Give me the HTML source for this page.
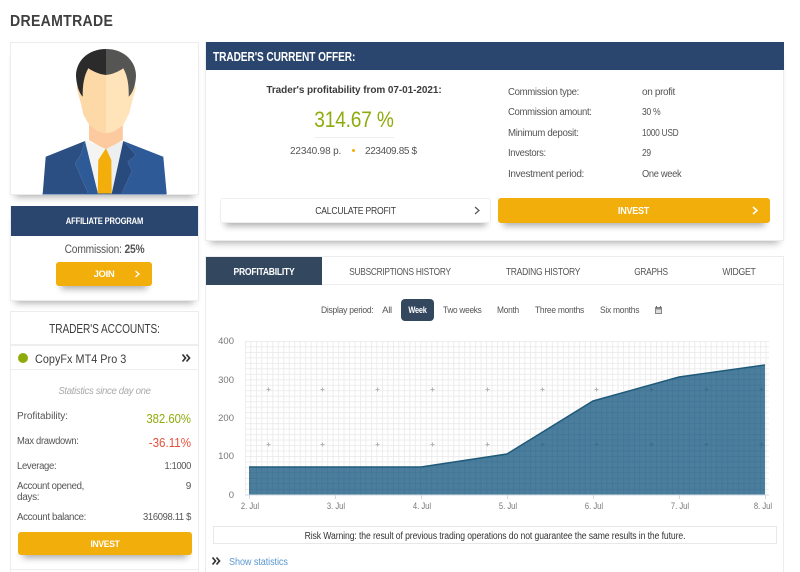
<!DOCTYPE html>
<html lang="en"><head><meta charset="utf-8"><title>DreamTrade</title>
<style>
*{box-sizing:border-box}
html,body{margin:0;padding:0;background:#fff;width:800px;height:572px;overflow:hidden}
body{font-family:"Liberation Sans",sans-serif;color:#444}
#p{position:relative;width:800px;height:572px;overflow:hidden}
.a{position:absolute}
.t{position:absolute;white-space:nowrap;line-height:14px;height:14px;font-size:10px;letter-spacing:-.35px;color:#555;transform-origin:left center}
.c{text-align:center;transform-origin:center center}.r{text-align:right;transform-origin:right center}
.card{position:absolute;background:#fff;border:1px solid #ececec}
.sh{box-shadow:0 7px 7px -5px rgba(0,0,0,.32)}
.btn{position:absolute;border-radius:3px;background:#f2ae0b;box-shadow:0 8px 7px -5px rgba(0,0,0,.32)}
.w{color:#fff;font-weight:bold}
.d{font-size:9.5px;letter-spacing:-.3px}
.y{font-size:9.5px;letter-spacing:0;color:#777}
.x{font-size:9.5px;letter-spacing:0;color:#777;transform:scaleX(.8)}
svg{position:absolute;left:0;top:0;overflow:visible}
</style></head><body><div id="p">

<div class="t" style="left:10px;top:15px;font-size:16px;font-weight:bold;color:#3f3f3f;letter-spacing:.35px;transform:scaleX(.88)">DREAMTRADE</div>

<div class="card sh" style="left:10px;top:42px;width:189px;height:153px"></div>
<svg width="800" height="572" viewBox="0 0 800 572">
<path d="M89 120H122.7V140L106 150 89 140Z" fill="#fdc99f"/>
<path d="M76.7 88 81 104 83.5 115 89.3 125 98 131.5 106 133.5V60H84Z" fill="#fdd9a8"/>
<path d="M135.8 88 131.5 104 129.3 113 123.3 125 114 131.5 106 133.5V60H128Z" fill="#fee4b8"/>
<path d="M89 125.5Q106 141 122.7 125.5V140L106 149 89 140Z" fill="#fdc99f"/>
<path d="M106 49C88 49 76 61 76 76 76.5 85 79 93 82.7 96.7 82.5 85 84 76 88.3 68.3 94 72 100 74.5 106 75Z" fill="#2b2b2b"/>
<path d="M106 49C124 49 136 61 136 76 135.5 85 133 93 128.7 96.7 129 85 127.5 76 123.3 68.3 118 72 112 74.5 106 75Z" fill="#555553"/>
<path d="M85 140 106 149 123.3 140.5 114 194H98Z" fill="#f4f5f2"/>
<path d="M106 149 123.3 140.5 114 194H106Z" fill="#eceef0"/>
<path d="M42.7 193.7 45.7 156.7 85 141 80.7 155 75 163.3 88.3 193.7Z" fill="#2b4f83"/>
<path d="M85 141 98 193.7H88.3L75 163.3 80.7 155Z" fill="#2e5b98"/>
<path d="M123.3 141 163.3 156.7 166.7 193.7H121.7L131.7 171 127.7 161.7 136 155Z" fill="#2e5b98"/>
<path d="M123.3 141 136 155 127.7 161.7 131.7 171 121.7 193.7H111.7Z" fill="#284a7c"/>
<path d="M106 148.3 111.3 160 111.7 193.7H97.7L98.3 160Z" fill="#f3ae0c"/>
<rect x="42.5" y="193.5" width="124" height="1" fill="#2e5b98"/>
</svg>

<!-- Affiliate -->
<div class="card sh" style="left:10px;top:206px;width:189px;height:95px"></div>
<div class="a" style="left:11px;top:206px;width:187px;height:30px;background:#2b466e"></div>
<div class="t c w" style="left:11px;top:215px;width:187px;font-size:9.5px;letter-spacing:-.2px;transform:scaleX(.8)">AFFILIATE PROGRAM</div>
<div class="t c" style="left:11px;top:243px;width:187px;font-size:11.5px;letter-spacing:-.2px;transform:scaleX(.89)">Commission: <b>25%</b></div>
<div class="btn" style="left:56px;top:262px;width:96px;height:24px"></div>
<div class="t c w" style="left:56px;top:268px;width:96px;font-size:9.5px">JOIN</div>
<svg width="800" height="572"><path d="M135.5 271 139 274 135.5 277" fill="none" stroke="#fff" stroke-width="1.3"/></svg>

<!-- Accounts -->
<div class="card" style="left:10px;top:311px;width:189px;height:280px"></div>
<div class="t c" style="left:11px;top:322px;width:187px;font-size:12.5px;letter-spacing:-.1px;color:#3c3c3c;transform:scaleX(.81)">TRADER'S ACCOUNTS:</div>
<div class="a" style="left:11px;top:344px;width:187px;height:2px;background:#eee"></div>
<div class="a" style="left:18px;top:353px;width:10px;height:10px;border-radius:50%;background:#8eab0c"></div>
<div class="t" style="left:35px;top:352px;font-size:12px;letter-spacing:.05px;color:#3c3c3c;transform:scaleX(.9)">CopyFx MT4 Pro 3</div>
<svg width="800" height="572"><path d="M182.5 354.5 185.5 358 182.5 361.5M186.5 354.5 189.5 358 186.5 361.5" fill="none" stroke="#333" stroke-width="1.7"/></svg>
<div class="a" style="left:11px;top:369px;width:187px;height:1px;background:#eee"></div>
<div class="t c" style="left:11px;top:385px;width:187px;font-style:italic;color:#aaa;transform:scaleX(.96)">Statistics since day one</div>
<div class="t" style="left:17px;top:410px;letter-spacing:-.05px">Profitability:</div>
<div class="t r" style="left:100px;top:412px;width:91px;font-size:13px;letter-spacing:0;color:#8eab0c;transform:scaleX(.87)">382.60%</div>
<div class="t" style="left:17px;top:435px;transform:scaleX(.94)">Max drawdown:</div>
<div class="t r" style="left:100px;top:436px;width:91px;font-size:13px;letter-spacing:0;color:#e5503c;transform:scaleX(.89)">-36.11%</div>
<div class="t" style="left:17px;top:460px;transform:scaleX(.95)">Leverage:</div>
<div class="t r" style="left:100px;top:460px;width:91px;transform:scaleX(.93)">1:1000</div>
<div class="t" style="left:17px;top:480px;transform:scaleX(.96)">Account opened,</div>
<div class="t" style="left:17px;top:491px">days:</div>
<div class="t r" style="left:100px;top:480px;width:91px">9</div>
<div class="t" style="left:17px;top:511px;transform:scaleX(.97)">Account balance:</div>
<div class="t r" style="left:100px;top:511px;width:91px;transform:scaleX(.94)">316098.11 $</div>
<div class="btn" style="left:18px;top:532px;width:174px;height:23px"></div>
<div class="t c w" style="left:18px;top:538px;width:174px;font-size:9.5px;transform:scaleX(.9)">INVEST</div>
<div class="a" style="left:11px;top:569px;width:187px;height:1px;background:#eee"></div>

<!-- Offer -->
<div class="card sh" style="left:205px;top:42px;width:579px;height:199px"></div>
<div class="a" style="left:206px;top:42px;width:578px;height:28px;background:#2b466e"></div>
<div class="t w" style="left:213px;top:50px;font-size:12.5px;letter-spacing:-.1px;transform:scaleX(.81)">TRADER'S CURRENT OFFER:</div>
<div class="t c" style="left:254px;top:84px;width:200px;font-weight:bold;color:#3c3c3c;letter-spacing:-.07px">Trader's profitability from 07-01-2021:</div>
<div class="t c" style="left:284px;top:113px;width:140px;font-size:22px;letter-spacing:-.2px;color:#8eab0c;transform:scaleX(.87)">314.67 %</div>
<div class="a" style="left:314px;top:137px;width:80px;height:1px;background:#eee"></div>
<div class="t" style="left:290px;top:145px;letter-spacing:-.15px">22340.98 p.</div>
<div class="a" style="left:352px;top:149px;width:3px;height:3px;border-radius:50%;background:#f2ae0b"></div>
<div class="t" style="left:365px;top:145px">223409.85 $</div>

<div class="t" style="left:508px;top:86px;transform:scaleX(.96)">Commission type:</div><div class="t" style="left:642px;top:86px">on profit</div>
<div class="t" style="left:508px;top:106px;transform:scaleX(.954)">Commission amount:</div><div class="t" style="left:642px;top:106px;transform:scaleX(.86)">30 %</div>
<div class="t" style="left:508px;top:127px;transform:scaleX(.97)">Minimum deposit:</div><div class="t" style="left:642px;top:127px;transform:scaleX(.84)">1000 USD</div>
<div class="t" style="left:508px;top:147px;transform:scaleX(.95)">Investors:</div><div class="t" style="left:642px;top:147px;transform:scaleX(.85)">29</div>
<div class="t" style="left:508px;top:168px">Investment period:</div><div class="t" style="left:642px;top:168px;transform:scaleX(.93)">One week</div>

<div class="btn" style="left:220px;top:198px;width:271px;height:25px;background:#fff;border:1px solid #eee"></div>
<div class="t c" style="left:220px;top:205px;width:271px;color:#3c3c3c;letter-spacing:-.25px;transform:scaleX(.86)">CALCULATE PROFIT</div>
<svg width="800" height="572"><path d="M475 207 479 210.5 475 214" fill="none" stroke="#555" stroke-width="1.2"/></svg>
<div class="btn" style="left:498px;top:198px;width:272px;height:25px"></div>
<div class="t c w" style="left:498px;top:205px;width:271px;letter-spacing:-.25px;transform:scaleX(.9)">INVEST</div>
<svg width="800" height="572"><path d="M753 207 757 210.5 753 214" fill="none" stroke="#fff" stroke-width="1.5"/></svg>

<!-- Tabs -->
<div class="card" style="left:205px;top:256px;width:579px;height:340px"></div>
<div class="a" style="left:206px;top:284px;width:578px;height:1px;background:#eee"></div>
<div class="a" style="left:206px;top:257px;width:116px;height:28px;background:#33475f"></div>
<div class="t c w" style="left:206px;top:266px;width:116px;letter-spacing:-.3px;transform:scaleX(.86)">PROFITABILITY</div>
<div class="t c" style="left:330px;top:266px;width:140px;letter-spacing:-.3px;transform:scaleX(.83)">SUBSCRIPTIONS HISTORY</div>
<div class="t c" style="left:483px;top:266px;width:120px;letter-spacing:-.3px;transform:scaleX(.85)">TRADING HISTORY</div>
<div class="t c" style="left:611px;top:266px;width:80px;letter-spacing:-.3px;transform:scaleX(.83)">GRAPHS</div>
<div class="t c" style="left:699px;top:266px;width:80px;letter-spacing:-.3px;transform:scaleX(.87)">WIDGET</div>

<div class="t d" style="left:320.5px;top:304px;transform:scaleX(.9)">Display period:</div>
<div class="t c d" style="left:377px;top:304px;width:20px">All</div>
<div class="a" style="left:401px;top:299px;width:33px;height:22px;border-radius:4px;background:#33475f"></div>
<div class="t c w d" style="left:401px;top:304px;width:33px;transform:scaleX(.78)">Week</div>
<div class="t d" style="left:443px;top:304px;transform:scaleX(.87)">Two weeks</div>
<div class="t d" style="left:497px;top:304px;transform:scaleX(.88)">Month</div>
<div class="t d" style="left:535px;top:304px;transform:scaleX(.89)">Three months</div>
<div class="t d" style="left:600px;top:304px;transform:scaleX(.89)">Six months</div>
<svg width="800" height="572"><rect x="655" y="307" width="7" height="7" fill="#888"/><rect x="656" y="309.5" width="5" height="3.5" fill="#ddd"/><path d="M656.5 306V308M660.5 306V308" stroke="#666"/></svg>

<!-- Chart -->
<svg width="800" height="572" viewBox="0 0 800 572">
<defs>
<pattern id="g" x="245" y="341" width="5.48" height="5.48" patternUnits="userSpaceOnUse"><path d="M0 0H5.48M0 0V5.48" stroke="#e8e8e8" stroke-width="1.5" fill="none"/></pattern>
<pattern id="g2" x="245" y="341" width="5.48" height="5.48" patternUnits="userSpaceOnUse"><path d="M0 0H5.48M0 0V5.48" stroke="#2f6585" stroke-width="1.2" fill="none" opacity=".4"/></pattern>
</defs>
<rect x="245" y="341" width="524" height="152" fill="url(#g)"/>
<path d="M249 467H421L507 454 593 401 679 377 765 365V494.5H249Z" fill="#4b7d9d"/>
<path d="M249 467H421L507 454 593 401 679 377 765 365V494.5H249Z" fill="url(#g2)"/>
<path d="M249 467H421L507 454 593 401 679 377 765 365" fill="none" stroke="#1f5a7a" stroke-width="1.5"/>
<path d="M245 495H769" stroke="#cfdbe4"/>
<path d="M249.5 495V499M335.5 495V499M421.5 495V499M507.5 495V499M593.5 495V499M679.5 495V499M765.5 495V499" stroke="#cfdbe4"/>
<path d="M266.5 389.5H270.5M268.5 387.5V391.5M320.5 389.5H324.5M322.5 387.5V391.5M375.5 389.5H379.5M377.5 387.5V391.5M430.5 389.5H434.5M432.5 387.5V391.5M485.5 389.5H489.5M487.5 387.5V391.5M540.5 389.5H544.5M542.5 387.5V391.5M594.5 389.5H598.5M596.5 387.5V391.5M266.5 444.5H270.5M268.5 442.5V446.5M320.5 444.5H324.5M322.5 442.5V446.5M375.5 444.5H379.5M377.5 442.5V446.5M430.5 444.5H434.5M432.5 442.5V446.5M485.5 444.5H489.5M487.5 442.5V446.5" stroke="#b4b4b4" stroke-width="1"/>
<path d="M649.5 389.5H653.5M651.5 387.5V391.5M704.5 389.5H708.5M706.5 387.5V391.5M759.5 389.5H763.5M761.5 387.5V391.5M540.5 444.5H544.5M542.5 442.5V446.5M594.5 444.5H598.5M596.5 442.5V446.5M649.5 444.5H653.5M651.5 442.5V446.5M704.5 444.5H708.5M706.5 442.5V446.5M759.5 444.5H763.5M761.5 442.5V446.5" stroke="#3a6c8b" stroke-width="1"/>
</svg>
<div class="t r y" style="left:212px;top:335px;width:22px">400</div>
<div class="t r y" style="left:212px;top:374px;width:22px">300</div>
<div class="t r y" style="left:212px;top:412px;width:22px">200</div>
<div class="t r y" style="left:212px;top:450px;width:22px">100</div>
<div class="t r y" style="left:212px;top:489px;width:22px">0</div>
<div class="t c x" style="left:230px;top:500px;width:40px">2. Jul</div>
<div class="t c x" style="left:316px;top:500px;width:40px">3. Jul</div>
<div class="t c x" style="left:402px;top:500px;width:40px">4. Jul</div>
<div class="t c x" style="left:488px;top:500px;width:40px">5. Jul</div>
<div class="t c x" style="left:574px;top:500px;width:40px">6. Jul</div>
<div class="t c x" style="left:660px;top:500px;width:40px">7. Jul</div>
<div class="t c x" style="left:743px;top:500px;width:40px">8. Jul</div>

<div class="a" style="left:213px;top:526px;width:564px;height:18px;border:1px solid #e8e8e8"></div>
<div class="t c" style="left:213px;top:530px;width:564px;color:#333;letter-spacing:-.12px;transform:scaleX(.864)">Risk Warning: the result of previous trading operations do not guarantee the same results in the future.</div>
<svg width="800" height="572"><path d="M212.5 557.5 215.5 561 212.5 564.5M216.5 557.5 219.5 561 216.5 564.5" fill="none" stroke="#333" stroke-width="1.7"/></svg>
<div class="t" style="left:229px;top:556px;color:#5b97cf;letter-spacing:-.1px;transform:scaleX(.91)">Show statistics</div>
</div></body></html>
